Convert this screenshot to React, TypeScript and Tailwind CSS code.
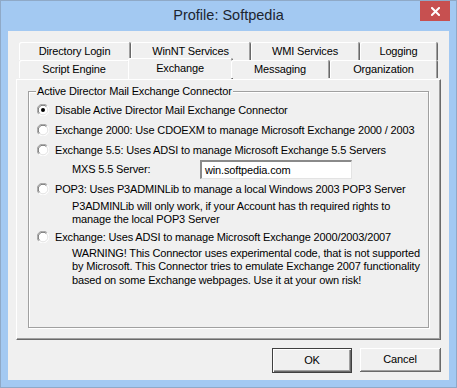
import React from "react";

const font = { fontFamily: '"Liberation Sans", Arial, sans-serif' };

function Radio({ checked = false }: { checked?: boolean }) {
  return (
    <svg width="12" height="12" viewBox="0 0 12 12" className="shrink-0">
      <circle cx="6" cy="6" r="5.5" fill="#ffffff" />
      <path d="M10.2 1.8 A5.5 5.5 0 0 0 1.8 10.2" fill="none" stroke="#a0a0a0" strokeWidth="1" />
      <path d="M9.4 2.6 A4.5 4.5 0 0 0 2.6 9.4" fill="none" stroke="#696969" strokeWidth="1" />
      <path d="M1.8 10.2 A5.5 5.5 0 0 0 10.2 1.8" fill="none" stroke="#ffffff" strokeWidth="1" />
      <path d="M2.6 9.4 A4.5 4.5 0 0 0 9.4 2.6" fill="none" stroke="#e3e3e3" strokeWidth="1" />
      {checked && <circle cx="6" cy="6" r="2" fill="#000" />}
    </svg>
  );
}

function Tab({ label, w }: { label: string; w: string }) {
  return (
    <div
      className={`${w} h-[18px] flex items-center justify-center rounded-t-[2px] border-r border-r-[#696969] shadow-[inset_1px_1px_0_#ffffff,inset_-1px_0_0_#a0a0a0] bg-[#f0f0f0] text-black`}
    >
      {label}
    </div>
  );
}

function OptionRow({ checked, children }: { checked?: boolean; children: React.ReactNode }) {
  return (
    <div className="flex items-center h-[20px]">
      <Radio checked={checked} />
      <span className="ml-[6px] whitespace-nowrap">{children}</span>
    </div>
  );
}

export default function App() {
  return (
    <div
      className="w-[457px] h-[388px] bg-[#a3c9f2] border border-[#8fa9c7] flex flex-col text-[11px] tracking-[-0.15px] text-black"
      style={font}
    >
      {/* Title bar */}
      <div className="h-[30px] flex items-start relative">
        <div className="flex-1 flex items-center justify-center h-[28px] pt-[1px] text-[14.5px] tracking-normal text-[#1c2530]">
          Profile: Softpedia
        </div>
        <div className="absolute right-[6px] top-0 w-[30px] h-[20px] bg-[#c75050] flex items-center justify-center">
          <svg width="9" height="9" viewBox="0 0 9 9">
            <path d="M1 1 L8 8 M8 1 L1 8" stroke="#fff" strokeWidth="2" strokeLinecap="square" />
          </svg>
        </div>
      </div>

      {/* Client area */}
      <div className="mx-[7px] h-[349px] bg-[#f0f0f0] flex flex-col px-[8px] pt-[11px]">
        {/* Tab rows */}
        <div className="flex pl-[3px]">
          <Tab label="Directory Login" w="w-[112px]" />
          <Tab label="WinNT Services" w="w-[120px]" />
          <Tab label="WMI Services" w="w-[109px]" />
          <Tab label="Logging" w="w-[78px]" />
        </div>
        <div className="flex pl-[3px] relative z-10">
          <Tab label="Script Engine" w="w-[111px]" />
          <div className="w-[105px] -ml-[2px] -mr-[2px] -mt-[2px] h-[21px] flex items-start pt-[2px] justify-center rounded-t-[2px] border-r border-r-[#696969] shadow-[inset_1px_1px_0_#ffffff,inset_-1px_0_0_#a0a0a0] bg-[#f0f0f0]">
            Exchange
          </div>
          <Tab label="Messaging" w="w-[99px]" />
          <Tab label="Organization" w="w-[108px]" />
        </div>

        {/* Tab panel */}
        <div className="h-[261px] border-l border-t border-l-white border-t-white border-r border-b border-r-[#696969] border-b-[#696969] shadow-[inset_-1px_-1px_0_#a0a0a0] pl-[11px] pt-[11px]">
          <div className="relative w-[401px] h-[237px] border border-[#a0a0a0] shadow-[1px_1px_0_#ffffff,inset_1px_1px_0_#ffffff] pl-[8px] pt-[8px]">
            <div className="absolute -top-[7px] left-[7px] px-[1px] bg-[#f0f0f0] leading-[13px] whitespace-nowrap">
              Active Director Mail Exchange Connector
            </div>
            <OptionRow checked>Disable Active Director Mail Exchange Connector</OptionRow>
            <OptionRow>Exchange 2000: Use CDOEXM to manage Microsoft Exchange 2000 / 2003</OptionRow>
            <OptionRow>Exchange 5.5: Uses ADSI to manage Microsoft Exchange 5.5 Servers</OptionRow>
            <div className="flex items-center h-[19px] pl-[35px]">
              <span className="w-[128px]">MXS 5.5 Server:</span>
              <div className="w-[152px] h-[19px] bg-white border-t-2 border-l-2 border-t-[#8a8a8a] border-l-[#8a8a8a] border-r border-b border-r-[#e3e3e3] border-b-[#e3e3e3] flex items-center pl-[3px]">
                win.softpedia.com
              </div>
            </div>
            <OptionRow>POP3: Uses P3ADMINLib to manage a local Windows 2003 POP3 Server</OptionRow>
            <div className="pl-[35px] leading-[13px] pt-[1px] h-[28px] w-[380px]">
              P3ADMINLib will only work, if your Account has th required rights to
              <br />
              manage the local POP3 Server
            </div>
            <OptionRow>Exchange: Uses ADSI to manage Microsoft Exchange 2000/2003/2007</OptionRow>
            <div className="pl-[35px] leading-[13.4px] whitespace-nowrap">
              WARNING! This Connector uses experimental code, that is not supported
              <br />
              by Microsoft. This Connector tries to emulate Exchange 2007 functionality
              <br />
              based on some Exchange webpages. Use it at your own risk!
            </div>
          </div>
        </div>

        {/* Buttons */}
        <div className="flex justify-end gap-[8px] mt-[8px]">
          <div className="w-[80px] h-[25px] border border-[#404040] shadow-[inset_1px_1px_0_#ffffff,inset_-1px_-1px_0_#696969,inset_-2px_-2px_0_#a0a0a0] flex items-center justify-center">
            OK
          </div>
          <div className="w-[81px] h-[24px] border-r border-b border-r-[#696969] border-b-[#696969] shadow-[inset_1px_1px_0_#ffffff,inset_-1px_-1px_0_#a0a0a0] flex items-center justify-center">
            Cancel
          </div>
        </div>
      </div>
    </div>
  );
}
